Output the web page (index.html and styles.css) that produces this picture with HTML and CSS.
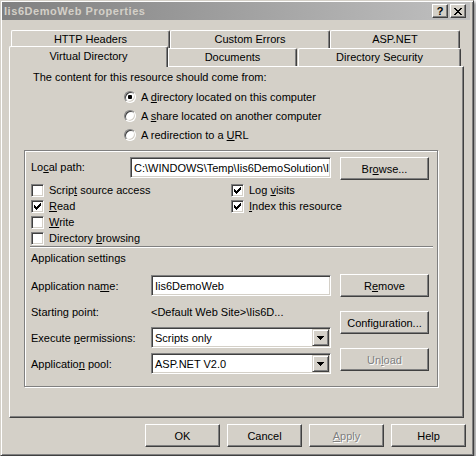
FILE: index.html
```html
<!DOCTYPE html>
<html>
<head>
<meta charset="utf-8">
<link rel="stylesheet" href="styles.css">
</head>
<body>
<div class="window">
  <div class="titlebar">
    <span class="title">Iis6DemoWeb Properties</span>
    <div class="tb-btns">
      <span class="tb-btn help">?</span>
      <span class="tb-btn close"><svg width="8" height="7" viewBox="0 0 8 7" shape-rendering="crispEdges"><path d="M0 0h2v1H0zM6 0h2v1H6zM1 1h2v1H1zM5 1h2v1H5zM2 2h4v1H2zM3 3h2v1H3zM2 4h4v1H2zM1 5h2v1H1zM5 5h2v1H5zM0 6h2v1H0zM6 6h2v1H6z" fill="#000"/></svg></span>
    </div>
  </div>
  <div class="body">
    <div class="tabs">
      <div class="tabrow back">
        <div class="tab t-http">HTTP Headers</div>
        <div class="tab t-errors">Custom Errors</div>
        <div class="tab t-asp">ASP.NET</div>
      </div>
      <div class="tabrow front">
        <div class="tab sel t-vdir">Virtual Directory</div>
        <div class="tab t-docs">Documents</div>
        <div class="tab t-sec">Directory Security</div>
      </div>
    </div>
    <div class="panel">
      <div class="intro">The content for this resource should come from:</div>
      <div class="radios">
        <div class="radio-row"><span class="radio on"></span><span class="lbl">A <u>d</u>irectory located on this computer</span></div>
        <div class="radio-row"><span class="radio"></span><span class="lbl">A <u>s</u>hare located on another computer</span></div>
        <div class="radio-row"><span class="radio"></span><span class="lbl">A redirection to a <u>U</u>RL</span></div>
      </div>
      <div class="group">
        <div class="path-row">
          <span class="path-label">Lo<u>c</u>al path:</span>
          <div class="field path-field"><span class="field-text">C:\WINDOWS\Temp\Iis6DemoSolution\I</span></div>
          <button class="btn browse">Br<u>o</u>wse...</button>
        </div>
        <div class="checks">
          <div class="check-col left">
            <div class="check-row"><span class="check"></span><span class="lbl">Scrip<u>t</u> source access</span></div>
            <div class="check-row"><span class="check on"><svg width="7" height="7" viewBox="0 0 7 7" shape-rendering="crispEdges"><path d="M6 0h1v1H6zM5 1h2v1H5zM0 2h1v1H0zM4 2h3v1H4zM0 3h2v1H0zM3 3h3v1H3zM0 4h5v1H0zM1 5h3v1H1zM2 6h1v1H2z" fill="#000"/></svg></span><span class="lbl"><u>R</u>ead</span></div>
            <div class="check-row"><span class="check"></span><span class="lbl"><u>W</u>rite</span></div>
            <div class="check-row"><span class="check"></span><span class="lbl">Directory <u>b</u>rowsing</span></div>
          </div>
          <div class="check-col right">
            <div class="check-row"><span class="check on"><svg width="7" height="7" viewBox="0 0 7 7" shape-rendering="crispEdges"><path d="M6 0h1v1H6zM5 1h2v1H5zM0 2h1v1H0zM4 2h3v1H4zM0 3h2v1H0zM3 3h3v1H3zM0 4h5v1H0zM1 5h3v1H1zM2 6h1v1H2z" fill="#000"/></svg></span><span class="lbl">Log <u>v</u>isits</span></div>
            <div class="check-row"><span class="check on"><svg width="7" height="7" viewBox="0 0 7 7" shape-rendering="crispEdges"><path d="M6 0h1v1H6zM5 1h2v1H5zM0 2h1v1H0zM4 2h3v1H4zM0 3h2v1H0zM3 3h3v1H3zM0 4h5v1H0zM1 5h3v1H1zM2 6h1v1H2z" fill="#000"/></svg></span><span class="lbl"><u>I</u>ndex this resource</span></div>
          </div>
        </div>
        <div class="separator"></div>
        <div class="app-title">Application settings</div>
        <div class="app">
          <div class="app-fields">
            <div class="app-row r-name">
              <span class="app-label">Application na<u>m</u>e:</span>
              <div class="field app-field"><span class="field-text">Iis6DemoWeb</span></div>
            </div>
            <div class="app-row r-start">
              <span class="app-label">Starting point:</span>
              <span class="start-value">&lt;Default Web Site&gt;\Iis6D...</span>
            </div>
            <div class="app-row r-exec">
              <span class="app-label">Execute <u>p</u>ermissions:</span>
              <div class="field app-field select"><span class="field-text">Scripts only</span><span class="drop"><svg width="7" height="4" viewBox="0 0 7 4" shape-rendering="crispEdges"><path d="M0 0h7v1H0zM1 1h5v1H1zM2 2h3v1H2zM3 3h1v1H3z" fill="#000"/></svg></span></div>
            </div>
            <div class="app-row r-pool">
              <span class="app-label">Applicatio<u>n</u> pool:</span>
              <div class="field app-field select"><span class="field-text">ASP.NET V2.0</span><span class="drop"><svg width="7" height="4" viewBox="0 0 7 4" shape-rendering="crispEdges"><path d="M0 0h7v1H0zM1 1h5v1H1zM2 2h3v1H2zM3 3h1v1H3z" fill="#000"/></svg></span></div>
            </div>
          </div>
          <div class="app-buttons">
            <button class="btn b-remove">R<u>e</u>move</button>
            <button class="btn b-config">Configuration...</button>
            <button class="btn b-unload disabled">Un<u>l</u>oad</button>
          </div>
        </div>
      </div>
    </div>
    <div class="footer">
      <button class="btn fbtn">OK</button>
      <button class="btn fbtn">Cancel</button>
      <button class="btn fbtn disabled"><u>A</u>pply</button>
      <button class="btn fbtn">Help</button>
    </div>
  </div>
</div>
</body>
</html>
```

FILE: styles.css
```css
* { box-sizing: border-box; }
html, body { margin: 0; padding: 0; background: #fff; }
body {
  font-family: "Liberation Sans", Arial, sans-serif;
  font-size: 11px;
  color: #000;
}
u { text-decoration: underline; text-underline-offset: 1px; }

.window {
  width: 474px;
  height: 456px;
  background: #d4d0c8;
  border: 1px solid;
  border-color: #d4d0c8 #404040 #404040 #d4d0c8;
  box-shadow: inset 1px 1px #fff, inset -1px -1px #808080, 2px 2px 3px rgba(0,0,0,0.45);
  padding: 1px 3px 3px 1px;
  display: flex;
  flex-direction: column;
}

.titlebar {
  height: 18px;
  background: linear-gradient(to right, #808080, #c0c0c0);
  display: flex;
  align-items: center;
  justify-content: space-between;
  padding: 0 4px 0 2px;
}
.title {
  color: #d4d0c8;
  font-weight: bold;
  font-size: 11px;
  letter-spacing: 0.55px;
}
.tb-btns { display: flex; gap: 1px; }
.tb-btn {
  width: 16px;
  height: 14px;
  background: #d4d0c8;
  border: 1px solid;
  border-color: #fff #404040 #404040 #fff;
  box-shadow: inset -1px -1px #808080;
  display: flex;
  align-items: center;
  justify-content: center;
}
.tb-btn.help { font-weight: bold; font-size: 11px; line-height: 12px; }
.tb-btn.close { margin-left: 1px; }

.body {
  flex: 1;
  display: flex;
  flex-direction: column;
  padding: 10px 0 0 7px;
}

.tabs { position: relative; z-index: 2; }
.tabrow { display: flex; }
.tabrow.back { margin-left: 2px; height: 18px; }
.tabrow.front { height: 18px; }
.tab {
  background: #d4d0c8;
  border-top: 1px solid #fff;
  border-left: 1px solid #fff;
  border-right: 1px solid #404040;
  border-top-left-radius: 2px;
  border-top-right-radius: 2px;
  box-shadow: inset -1px 0 #808080;
  text-align: center;
  padding-top: 2px;
  height: 18px;
  white-space: nowrap;
}
.t-http { width: 159px; }
.t-errors { width: 160px; }
.t-asp { width: 130px; }
.t-vdir { width: 159px; }
.t-docs { width: 129px; }
.t-sec { width: 163px; margin-left: 1px; }
.tab.sel {
  height: 21px;
  margin-top: -2px;
  padding-top: 3px;
  position: relative;
  z-index: 3;
}

.panel {
  width: 455px;
  height: 352px;
  background: #d4d0c8;
  border: 1px solid;
  border-color: #fff #404040 #404040 #fff;
  box-shadow: inset -1px -1px #808080;
  position: relative;
  z-index: 1;
}

.intro { margin: 4px 0 0 23px; line-height: 13px; }

.radios { margin: 3px 0 0 114px; }
.radio-row { height: 19px; display: flex; align-items: center; }
.radio {
  width: 12px;
  height: 12px;
  border-radius: 50%;
  background: #fff;
  border: 1px solid;
  border-color: #808080 #fff #fff #808080;
  box-shadow: inset 1px 1px #404040, inset -1px -1px #d4d0c8;
  position: relative;
  flex: none;
}
.radio.on::after {
  content: "";
  position: absolute;
  left: 3px;
  top: 3px;
  width: 4px;
  height: 4px;
  border-radius: 1px;
  background: #000;
}
.lbl { margin-left: 5px; white-space: nowrap; }

.group {
  margin: 6px 0 0 14px;
  width: 414px;
  height: 237px;
  border: 1px solid #808080;
  box-shadow: inset 1px 1px #fff, 1px 1px 0 #fff;
}

.path-row { display: flex; align-items: flex-start; margin-top: 6px; height: 23px; }
.path-label { width: 105px; padding-left: 6px; line-height: 21px; }
.field {
  background: #fff;
  border: 1px solid;
  border-color: #808080 #fff #fff #808080;
  box-shadow: inset 1px 1px #404040, inset -1px -1px #d4d0c8;
  height: 21px;
  display: flex;
  align-items: center;
  overflow: hidden;
  white-space: nowrap;
}
.field-text { padding-left: 3px; }
.path-field { width: 201px; }
.btn {
  font-family: "Liberation Sans", Arial, sans-serif;
  font-size: 11px;
  color: #000;
  background: #d4d0c8;
  border: 1px solid;
  border-color: #fff #404040 #404040 #fff;
  box-shadow: inset -1px -1px #808080;
  height: 23px;
  padding: 0;
  display: flex;
  align-items: center;
  justify-content: center;
  flex: none;
  white-space: nowrap;
}
.btn.disabled { color: #808080; text-shadow: 1px 1px #fff; }
.browse { width: 89px; margin-left: 9px; }

.checks { display: flex; margin-top: 2px; padding-left: 6px; }
.check-col.left { width: 200px; }
.check-row { height: 16px; display: flex; align-items: center; }
.check {
  width: 13px;
  height: 13px;
  background: #fff;
  border: 1px solid;
  border-color: #808080 #fff #fff #808080;
  box-shadow: inset 1px 1px #404040, inset -1px -1px #d4d0c8;
  display: flex;
  align-items: center;
  justify-content: center;
  flex: none;
}
.check svg { display: block; }

.separator {
  margin: 0 0 0 5px;
  width: 403px;
  height: 2px;
  border-top: 1px solid #808080;
  border-bottom: 1px solid #fff;
}

.app-title { margin: 4px 0 0 6px; line-height: 13px; }

.app { display: flex; }
.app-fields { width: 309px; padding-left: 6px; padding-top: 10px; }
.app-row { display: flex; align-items: center; }
.app-label { width: 120px; white-space: nowrap; }
.start-value { white-space: nowrap; }
.app-field { width: 180px; }
.r-name { height: 21px; }
.r-start { height: 31px; }
.r-exec { height: 21px; }
.r-pool { height: 21px; margin-top: 5px; }
.select { position: relative; }
.drop {
  position: absolute;
  right: 1px;
  top: 1px;
  width: 17px;
  height: 17px;
  background: #d4d0c8;
  border: 1px solid;
  border-color: #d4d0c8 #404040 #404040 #d4d0c8;
  box-shadow: inset 1px 1px #fff, inset -1px -1px #808080;
  display: flex;
  align-items: center;
  justify-content: center;
}
.app-buttons { display: flex; flex-direction: column; padding-top: 9px; margin-left: 6px; }
.app-buttons .btn { width: 89px; }
.b-config { margin-top: 14px; }
.b-unload { margin-top: 14px; }

.footer { display: flex; gap: 7px; padding-left: 136px; margin-top: 6px; }
.fbtn { width: 75px; }
```
